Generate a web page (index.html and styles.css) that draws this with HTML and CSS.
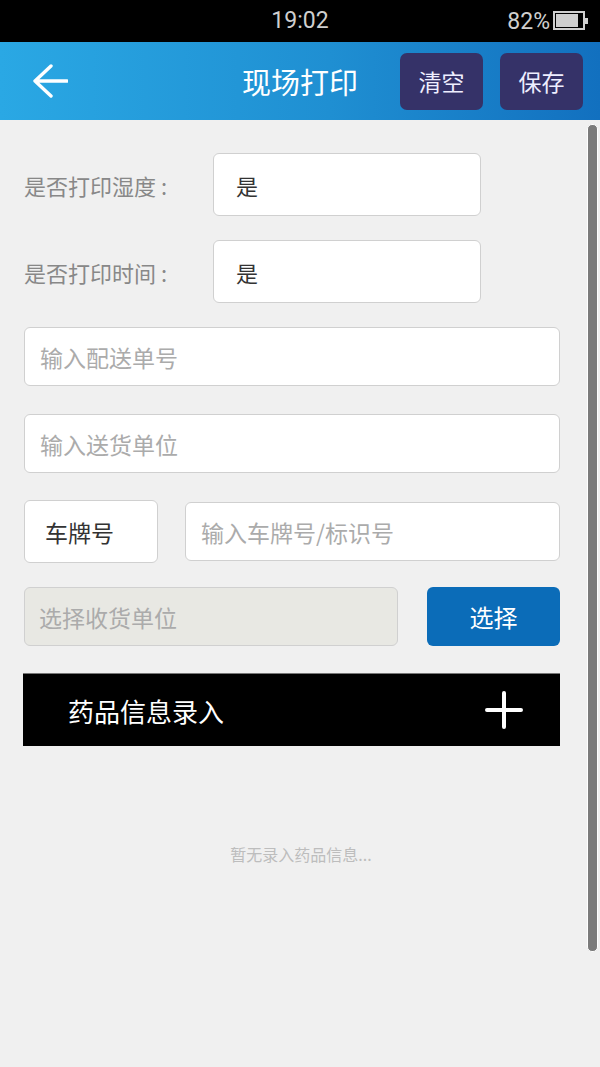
FILE: index.html
```html
<!DOCTYPE html>
<html lang="zh">
<head>
<meta charset="utf-8">
<title>现场打印</title>
<link rel="stylesheet" href="styles.css">
</head>
<body>
<div class="statusbar">
  <div class="sb-time">19:02</div>
  <div class="sb-right">
    <span class="sb-pct">82%</span>
    <svg class="battery" width="36" height="22" viewBox="0 0 36 22">
      <rect x="1" y="2" width="30" height="17" fill="none" stroke="#cfcfcf" stroke-width="2"/>
      <rect x="3" y="4" width="22" height="13" fill="#cfcfcf"/>
      <rect x="32" y="8" width="3" height="6" fill="#cfcfcf"/>
    </svg>
  </div>
</div>
<header class="topbar">
  <div class="tb-left">
    <svg class="back" width="36" height="36" viewBox="0 0 36 36">
      <path d="M19 3 L3 18 L19 33 M3 18 L35 18" fill="none" stroke="#fff" stroke-width="3.4" stroke-linecap="round" stroke-linejoin="round"/>
    </svg>
  </div>
  <div class="tb-title">现场打印</div>
  <div class="tb-right">
    <div class="tb-btn">清空</div>
    <div class="tb-btn">保存</div>
  </div>
</header>
<main class="content">
  <div class="form">
    <div class="row row-label r1">
      <div class="label">是否打印湿度<span class="colon">:</span></div>
      <div class="box box-select">是</div>
    </div>
    <div class="row row-label r2">
      <div class="label">是否打印时间<span class="colon">:</span></div>
      <div class="box box-select">是</div>
    </div>
    <div class="box full placeholder r3">输入配送单号</div>
    <div class="box full placeholder r4">输入送货单位</div>
    <div class="row r5">
      <div class="box plate-type">车牌号</div>
      <div class="box plate-input placeholder">输入车牌号/标识号</div>
    </div>
    <div class="row r6">
      <div class="box disabled placeholder">选择收货单位</div>
      <div class="choose-btn">选择</div>
    </div>
    <div class="drug-bar">
      <span>药品信息录入</span>
      <svg class="plus" width="38" height="38" viewBox="0 0 38 38">
        <path d="M19 2 V36 M2 19 H36" stroke="#fff" stroke-width="4" stroke-linecap="round"/>
      </svg>
    </div>
    <div class="empty">暂无录入药品信息...</div>
  </div>
  <div class="scrollbar"></div>
</main>
</body>
</html>
```

FILE: styles.css
```css
html, body {
  margin: 0;
  padding: 0;
}
body {
  width: 600px;
  height: 1067px;
  overflow: hidden;
  background: #f0f0f0;
  font-family: "Noto Sans CJK SC", "Noto Sans", sans-serif;
}
.statusbar {
  height: 42px;
  background: #000;
  color: #cfcfcf;
  display: grid;
  grid-template-columns: 1fr auto 1fr;
  align-items: center;
  font-family: Roboto, "Noto Sans", sans-serif;
}
.sb-time {
  grid-column: 2;
  font-size: 23px;
  line-height: 42px;
}
.sb-right {
  grid-column: 3;
  justify-self: end;
  display: flex;
  align-items: center;
  padding-right: 11px;
  gap: 3px;
}
.sb-pct {
  font-size: 23px;
}
.battery {
  display: block;
}
.topbar {
  height: 78px;
  background: linear-gradient(90deg, #2aa8e4 0%, #1f8fd2 55%, #1270bf 100%);
  display: grid;
  grid-template-columns: 1fr auto 1fr;
  align-items: center;
}
.tb-left {
  padding-left: 32px;
  display: flex;
  align-items: center;
}
.back {
  display: block;
}
.tb-title {
  color: #fff;
  font-size: 29px;
}
.tb-right {
  justify-self: end;
  display: flex;
  gap: 17px;
  padding-right: 17px;
}
.tb-btn {
  width: 83px;
  height: 57px;
  border-radius: 7px;
  background: #353268;
  color: #eef;
  font-size: 23px;
  display: flex;
  align-items: center;
  justify-content: center;
}
.content {
  position: relative;
  height: 947px;
}
.form {
  padding: 33px 40px 0 24px;
  display: flex;
  flex-direction: column;
}
.row {
  display: flex;
  align-items: center;
}
.box {
  box-sizing: border-box;
  background: #fff;
  border: 1.5px solid #d0d0d0;
  border-radius: 6px;
  display: flex;
  align-items: center;
  font-size: 22px;
  color: #333;
}
.label {
  width: 189px;
  font-size: 22px;
  color: #888;
}
.colon {
  margin-left: 5px;
}
.box-select {
  width: 268px;
  height: 63px;
  padding-left: 22px;
}
.r2 { margin-top: 24px; }
.full {
  height: 59px;
  padding-left: 15px;
}
.r3 { margin-top: 24px; }
.r4 { margin-top: 28px; }
.placeholder {
  color: #ababab;
  font-size: 23px;
}
.r5 {
  margin-top: 27px;
  height: 63px;
  gap: 27px;
}
.plate-type {
  width: 134px;
  height: 63px;
  padding-left: 20px;
  color: #333;
  font-size: 23px;
}
.plate-input {
  flex: 1;
  height: 59px;
  padding-left: 15px;
}
.r6 {
  margin-top: 24px;
  gap: 29px;
}
.disabled {
  width: 374px;
  height: 59px;
  padding-left: 14px;
  background: #e8e8e3;
}
.choose-btn {
  flex: 1;
  height: 59px;
  border-radius: 6px;
  background: #0b6cb8;
  color: #fff;
  font-size: 24px;
  display: flex;
  align-items: center;
  justify-content: center;
}
.drug-bar {
  margin-top: 27px;
  margin-left: -1px;
  height: 73px;
  background: #000;
  color: #fff;
  font-size: 26px;
  display: flex;
  align-items: center;
  justify-content: space-between;
  padding: 0 37px 0 45px;
  border-top: 1px solid #777;
  box-sizing: border-box;
}
.plus {
  display: block;
}
.empty {
  margin-top: 96px;
  text-align: center;
  font-size: 16px;
  color: #bdbdbd;
  padding-left: 18px;
}
.scrollbar {
  position: absolute;
  top: 4px;
  left: 587px;
  width: 9px;
  height: 826px;
  border-radius: 5px;
  background: #7b7b7b;
  border: 1px solid #fff;
}
```
